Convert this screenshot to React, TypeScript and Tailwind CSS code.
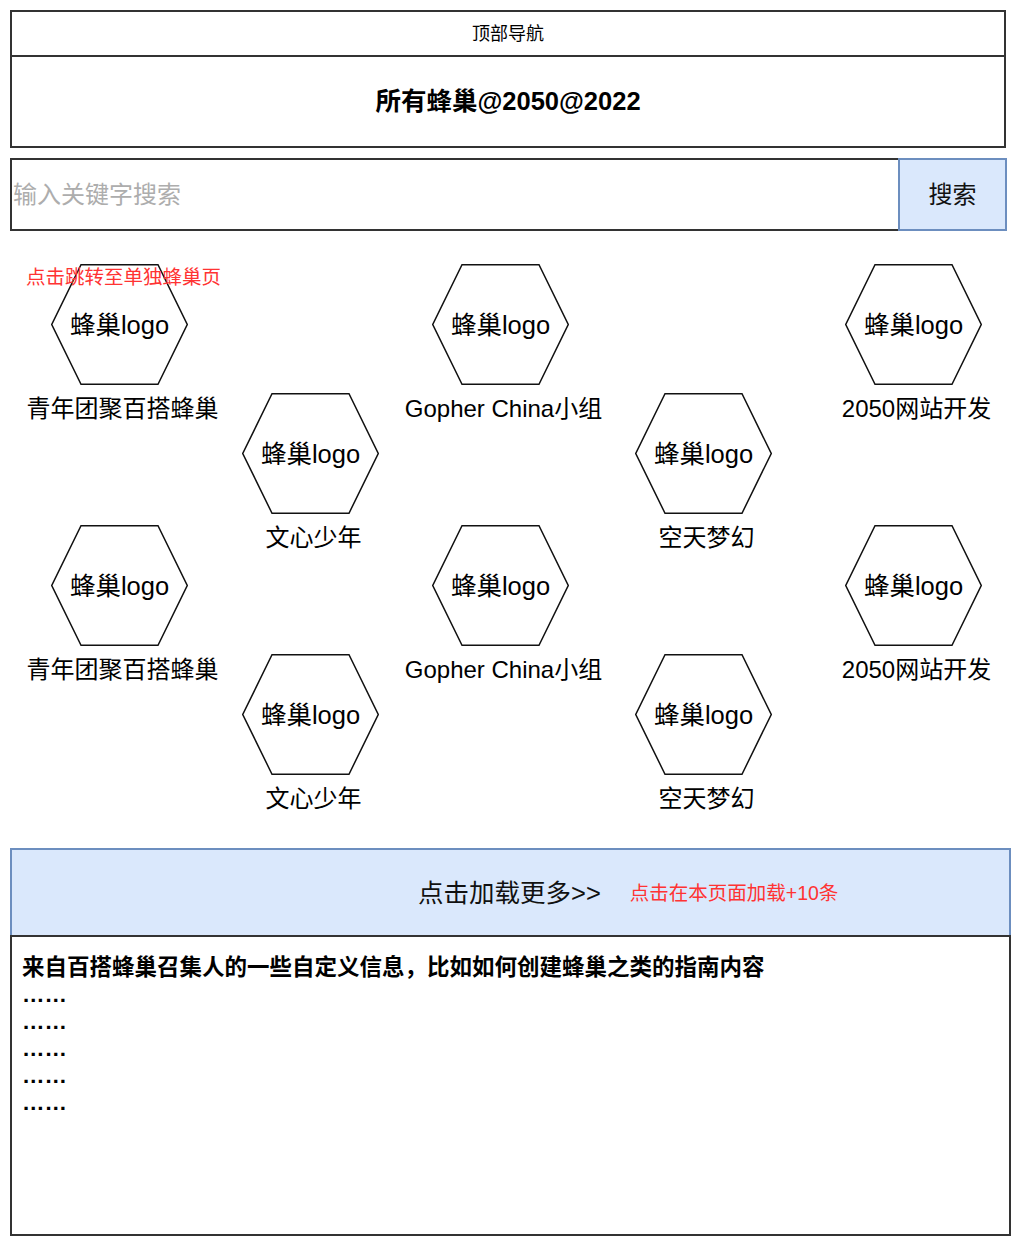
import React from "react";

function Hex() {
  return (
    <div className="relative w-[137px] h-[121px] flex items-center justify-center">
      <svg className="absolute inset-0" width="137" height="121" viewBox="0 0 137 121">
        <polygon
          points="30,0.75 107,0.75 136.25,60.5 107,120.25 30,120.25 0.75,60.5"
          fill="white"
          stroke="#111"
          strokeWidth="1.5"
        />
      </svg>
      <span className="relative text-[25.5px] leading-[26px] text-black whitespace-nowrap">蜂巢logo</span>
    </div>
  );
}

function Column({ ml, pt, label }: { ml: string; pt: string; label: string }) {
  return (
    <div className={`flex flex-col items-center w-[137px] shrink-0 ${ml} ${pt}`}>
      <Hex />
      <div className="mt-[12px] ml-[6px] text-[24px] leading-[24px] whitespace-nowrap text-black">{label}</div>
      <div className="mt-[104px]">
        <Hex />
      </div>
      <div className="mt-[12px] ml-[6px] text-[24px] leading-[24px] whitespace-nowrap text-black">{label}</div>
    </div>
  );
}

export default function App() {
  return (
    <div className="w-[1025px] min-h-[1253px] bg-white pt-[10px] font-['Liberation_Sans','Noto_Sans_CJK_SC',sans-serif] text-black">
      {/* Header */}
      <div className="ml-[10px] w-[996px] border-2 border-[#333]">
        <div className="h-[45px] border-b-2 border-[#333] flex items-center justify-center text-[18px] leading-[18px]">
          顶部导航
        </div>
        <div className="h-[89px] flex items-center justify-center text-[25.5px] font-bold">
          所有蜂巢@2050@2022
        </div>
      </div>

      {/* Search */}
      <div className="ml-[10px] mt-[10px] flex">
        <input
          className="w-[888px] h-[73px] border-2 border-r-0 border-[#333] outline-none pl-[1px] text-[24px] text-black placeholder:text-[#adadad] bg-white"
          placeholder="输入关键字搜索"
        />
        <div className="w-[109px] h-[73px] border-2 border-[#6c8ebf] bg-[#dae8fc] flex items-center justify-center text-[24px] text-[#111]">
          搜索
        </div>
      </div>

      {/* Hex area */}
      <div className="relative mt-[33px] pl-[51px] flex">
        <Column ml="ml-0" pt="pt-0" label="青年团聚百搭蜂巢" />
        <Column ml="ml-[54px]" pt="pt-[129px]" label="文心少年" />
        <Column ml="ml-[53px]" pt="pt-0" label="Gopher China小组" />
        <Column ml="ml-[66px]" pt="pt-[129px]" label="空天梦幻" />
        <Column ml="ml-[73px]" pt="pt-0" label="2050网站开发" />
        <div className="absolute z-10 left-[26px] top-[3px] text-[19.5px] leading-[20px] text-[#ff3333] whitespace-nowrap">
          点击跳转至单独蜂巢页
        </div>
      </div>

      {/* Load more */}
      <div className="mt-[37px] ml-[10px] w-[1001px] h-[87px] bg-[#dae8fc] border-2 border-b-0 border-[#6c8ebf] flex items-center pl-[406px] gap-[29px]">
        <span className="text-[25.5px] leading-[26px] text-[#111] whitespace-nowrap">点击加载更多&gt;&gt;</span>
        <span className="text-[19.5px] leading-[20px] text-[#ff3333] whitespace-nowrap">点击在本页面加载+10条</span>
      </div>

      {/* Info box */}
      <div className="ml-[10px] w-[1001px] h-[301px] border-2 border-[#333] px-[10px] pt-[17px] text-[22.5px] leading-[27px] font-bold">
        <div>来自百搭蜂巢召集人的一些自定义信息，比如如何创建蜂巢之类的指南内容</div>
        <div>……</div>
        <div>……</div>
        <div>……</div>
        <div>……</div>
        <div>……</div>
      </div>
    </div>
  );
}
